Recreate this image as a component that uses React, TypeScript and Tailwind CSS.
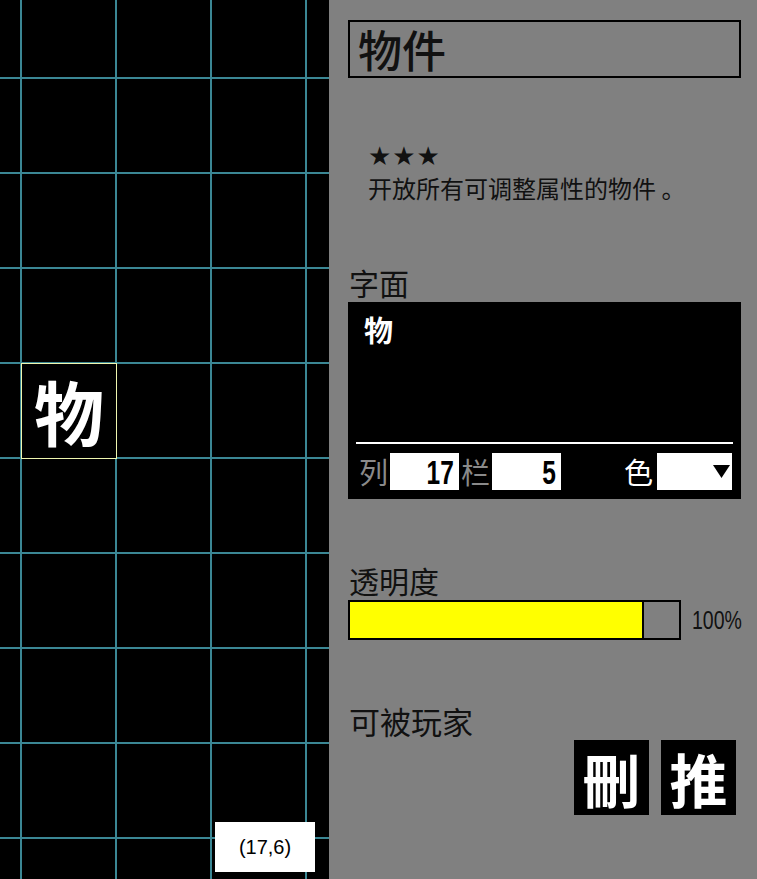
import React from 'react';

const CJK = "font-['Noto_Sans_CJK_SC',sans-serif]";
const LATIN = "font-['Liberation_Sans',Arial,sans-serif]";

const vLines = [21, 116, 211, 306];
const hLines = [78, 173, 268, 363, 458, 553, 648, 743, 838];

function Canvas() {
  return (
    <div className="relative w-[329px] h-[879px] bg-black overflow-hidden shrink-0">
      <svg width="329" height="879" className="absolute inset-0">
        {vLines.map((x) => (
          <line key={`v${x}`} x1={x} y1={0} x2={x} y2={879} stroke="#3b8794" strokeWidth={2} />
        ))}
        {hLines.map((y) => (
          <line key={`h${y}`} x1={0} y1={y} x2={329} y2={y} stroke="#3b8794" strokeWidth={2} />
        ))}
      </svg>

      {/* selected object */}
      <div className="absolute left-[21px] top-[363px] w-[96px] h-[96px] border border-[#eef6b0] bg-black flex items-center justify-center">
        <span className={`${CJK} text-[70px] leading-none font-bold text-white`}>物</span>
      </div>

      {/* cursor coordinate */}
      <div className="absolute left-[215px] top-[822px] w-[100px] h-[50px] bg-white flex items-center justify-center">
        <span className={`${LATIN} text-[20px] text-black`}>(17,6)</span>
      </div>
    </div>
  );
}

function Inspector() {
  return (
    <div className={`flex-1 min-w-0 h-[879px] bg-[#808080] pt-[20px] pl-[19px] pr-[16px] ${CJK} text-[#111]`}>
      <div className="h-[58px] border-2 border-black flex items-center pl-[8px]">
        <span className="text-[44px] leading-none font-medium">物件</span>
      </div>

      <div className="ml-[20px] mt-[68px] h-[20px] font-['DejaVu_Sans',sans-serif] text-[26px] leading-[20px] tracking-[1px]">★★★</div>
      <div className="ml-[20px] mt-[10px] text-[24px] leading-[24px]">开放所有可调整属性的物件 。</div>

      <div className="mt-[67px] ml-[1px] text-[30px] leading-[30px]">字面</div>
      <div className="mt-[5px] h-[197px] bg-black flex flex-col pb-[9px]">
        <div className="pt-[13px] pl-[16px] text-[29px] leading-[29px] font-bold text-white">物</div>
        <div className="flex-1" />
        <div className="mx-[8px] h-[2px] bg-white" />
        <div className="mt-[9px] mx-[8px] h-[37px] flex items-center">
          <span className="ml-[3px] text-[29px] leading-[37px] text-[#8a8a8a]">列</span>
          <div className="ml-[2px] w-[69px] h-[37px] bg-white flex items-center justify-end pr-[5px]">
            <span className={`${LATIN} inline-block text-[34px] leading-none font-bold text-black scale-x-[0.72] origin-right`}>17</span>
          </div>
          <span className="ml-[2px] text-[29px] leading-[37px] text-[#8a8a8a]">栏</span>
          <div className="ml-[2px] w-[69px] h-[37px] bg-white flex items-center justify-end pr-[5px]">
            <span className={`${LATIN} inline-block text-[34px] leading-none font-bold text-black scale-x-[0.72] origin-right`}>5</span>
          </div>
          <span className="ml-auto text-[29px] leading-[37px] text-white">色</span>
          <div className="ml-[4px] mr-[1px] w-[75px] h-[37px] bg-white flex items-center justify-end pr-[2px]">
            <svg width="17" height="13" viewBox="0 0 17 13">
              <polygon points="0,0 17,0 8.5,13" fill="#000" />
            </svg>
          </div>
        </div>
      </div>

      <div className="mt-[66px] ml-[1px] text-[30px] leading-[30px]">透明度</div>
      <div className="mt-[5px] flex items-center">
        <div className="shrink-0 w-[333px] h-[40px] border-2 border-black flex">
          <div className="w-[292px] bg-[#ffff00]" />
          <div className="flex-1 border-l-2 border-black" />
        </div>
        <span className={`${LATIN} shrink-0 ml-[11px] inline-block text-[25px] leading-none text-[#111] scale-x-[0.78] origin-left`}>100%</span>
      </div>

      <div className="mt-[65px] ml-[1px] text-[31px] leading-[31px]">可被玩家</div>
      <div className="mt-[4px] mr-[5px] flex justify-end gap-[12px]">
        <div className="w-[75px] h-[75px] bg-black flex items-center justify-center">
          <span className="text-[58px] leading-none font-bold text-white">刪</span>
        </div>
        <div className="w-[75px] h-[75px] bg-black flex items-center justify-center">
          <span className="text-[58px] leading-none font-bold text-white">推</span>
        </div>
      </div>
    </div>
  );
}

export default function App() {
  return (
    <div className="w-[757px] h-[879px] flex overflow-hidden">
      <Canvas />
      <Inspector />
    </div>
  );
}
